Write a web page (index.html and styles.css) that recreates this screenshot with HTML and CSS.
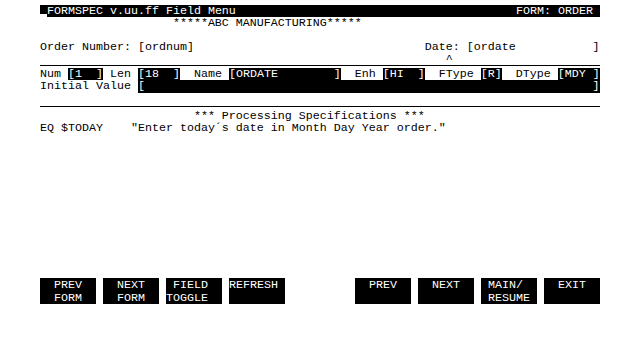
FILE: index.html
```html
<!DOCTYPE html>
<html lang="en">
<head>
    <meta charset="UTF-8">
    <title>FORMSPEC Field Menu</title>
    <link rel="stylesheet" href="styles.css">
</head>
<body>
    <div class="screen">
        <div class="row bar"><span><span class="cursor"></span>FORMSPEC v.uu.ff Field Menu</span><span>FORM: ORDER </span></div>
        <div class="row">                   *****ABC MANUFACTURING*****</div>
        <div class="row order">Order Number: [ordnum]                                 Date: [ordate           ]</div>
        <div class="row caret">                                                          ^</div>
        <div class="row field">Num <span class="inv">[1  ]</span> Len <span class="inv">[18  ]</span>  Name <span class="inv">[ORDATE        ]</span>  Enh <span class="inv">[HI  ]</span>  FType <span class="inv">[R]</span>  DType <span class="inv">[MDY ]</span></div>
        <div class="row init">Initial Value <span class="inv">[                                                                ]</span></div>
        <div class="row spacer"></div>
        <div class="row">                      *** Processing Specifications ***</div>
        <div class="row">EQ $TODAY    "Enter today´s date in Month Day Year order."</div>

        <!-- softkey labels -->
        <div class="keys">
            <div class="key-group">
                <div class="key">  PREV
  FORM</div>
                <div class="key">  NEXT
  FORM</div>
                <div class="key"> FIELD
TOGGLE</div>
                <div class="key">REFRESH</div>
            </div>
            <div class="key-group">
                <div class="key">  PREV</div>
                <div class="key">  NEXT</div>
                <div class="key"> MAIN/
 RESUME</div>
                <div class="key">  EXIT</div>
            </div>
        </div>
    </div>
</body>
</html>
```

FILE: styles.css
```css
body {
    margin: 0;
    background-color: #fff;
    color: #000;
}
.screen {
    width: 560px;
    margin-left: 40px;
    padding-top: 5px;
    font-family: "Liberation Mono", "DejaVu Sans Mono", monospace;
    font-size: 11.667px;
}
.row {
    height: 12px;
    line-height: 12px;
    white-space: pre;
}
.bar {
    display: flex;
    justify-content: space-between;
    background-color: #000;
    color: #fff;
}
.cursor {
    display: inline-block;
    width: 7px;
    height: 12px;
    vertical-align: top;
    background: linear-gradient(to top, #fff 3px, transparent 3px);
}
.order {
    margin-top: 12px;
    height: 13px;
    line-height: 13px;
}
.caret {
    height: 11px;
    line-height: 11px;
    border-bottom: 1px solid #000;
}
.field {
    margin-top: 2px;
}
.init {
    height: 13px;
    line-height: 13px;
}
.inv {
    background-color: #000;
    color: #fff;
    display: inline-block;
    height: 100%;
}
.spacer {
    height: 13px;
    border-bottom: 1px solid #000;
    margin-bottom: 3px;
}
.keys {
    display: flex;
    justify-content: space-between;
    margin-top: 144px;
}
.key-group {
    display: flex;
    gap: 7px;
}
.key {
    width: 56px;
    height: 26px;
    padding-top: 1px;
    box-sizing: border-box;
    background-color: #000;
    color: #fff;
    line-height: 13px;
    white-space: pre;
}
```
